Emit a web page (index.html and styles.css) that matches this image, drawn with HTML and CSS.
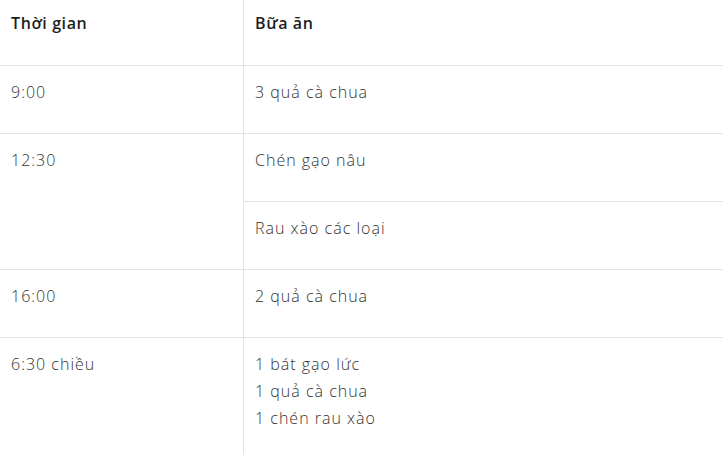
FILE: index.html
```html
<!DOCTYPE html>
<html lang="vi">
<head>
<meta charset="utf-8">
<link rel="stylesheet" href="styles.css">
</head>
<body>
<table class="meal-table">
  <thead>
    <tr>
      <th class="col-time">Thời gian</th>
      <th class="col-meal">Bữa ăn</th>
    </tr>
  </thead>
  <tbody>
    <tr>
      <td class="time">9:00</td>
      <td>3 quả cà chua</td>
    </tr>
    <tr>
      <td class="time" rowspan="2">12:30</td>
      <td>Chén gạo nâu</td>
    </tr>
    <tr>
      <td>Rau xào các loại</td>
    </tr>
    <tr>
      <td class="time">16:00</td>
      <td>2 quả cà chua</td>
    </tr>
    <tr>
      <td class="time">6:30 chiều</td>
      <td class="multi">1 bát gạo lức<br>1 quả cà chua<br>1 chén rau xào</td>
    </tr>
  </tbody>
</table>
</body>
</html>
```
FILE: styles.css
```css
html, body {
  margin: 0;
  padding: 0;
  background: #ffffff;
}
body {
  font-family: "Open Sans", "Lato", "Liberation Sans", sans-serif;
  color: #333333;
  font-size: 16px;
}
.meal-table {
  width: 723px;
  border-collapse: collapse;
  margin-top: -3px;
}
.meal-table th,
.meal-table td {
  text-align: left;
  vertical-align: top;
  padding: 13px 11px 27px 11px;
  line-height: 27px;
  border-bottom: 1px solid #e2e2e2;
  font-weight: 300;
  letter-spacing: 1px;
}
.meal-table th {
  color: #1e1e1e;
  font-weight: 600;
  letter-spacing: 0.6px;
  padding-top: 13px;
  padding-bottom: 28px;
}
.col-time {
  width: 221px;
  border-right: 1px solid #e2e2e2;
}
.meal-table td.time {
  border-right: 1px solid #e2e2e2;
}
.meal-table td.multi {
  padding-bottom: 40px;
}
```
